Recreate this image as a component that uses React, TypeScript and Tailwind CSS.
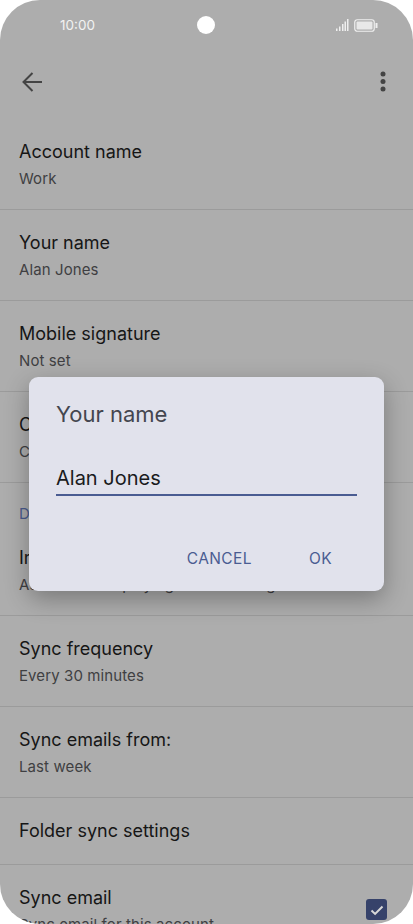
import React from "react"

const font = "font-['Inter',sans-serif]"

function Row({ title, sub, check }: { title: string; sub?: string; check?: boolean }) {
  return (
    <div className="relative border-b border-[#9b9b9b] px-[19px] pb-[18px] pt-[21px]">
      <div className="text-[18px] font-[430] leading-6 text-[#161616]">{title}</div>
      {sub && <div className="mt-[3px] text-[15px] leading-6 tracking-[0.1px] text-[#3f3f42]">{sub}</div>}
      {check && (
        <div className="absolute right-[26px] top-[34px] flex h-[21px] w-[21px] items-center justify-center rounded-[3px] bg-[#36426a]">
          <svg width="14" height="14" viewBox="0 0 14 14" fill="none" stroke="#d8d8d8" strokeWidth="2">
            <path d="M1.5 7.5l3.6 3.4L12.5 3.5" />
          </svg>
        </div>
      )}
    </div>
  )
}

export default function App() {
  return (
    <div className={`relative h-[924px] w-[413px] overflow-hidden bg-white ${font}`}>
      <div className="h-full overflow-hidden rounded-[40px] bg-[#adadad]">
        <div className="flex h-[50px] items-center justify-between pl-[60px] pr-[35px]">
          <span className="text-[13.5px] text-[#f2f2f2]">10:00</span>
          <div className="flex items-center gap-[5px]">
            <svg width="13" height="12" viewBox="0 0 13 12" fill="#efefef">
              <rect x="0" y="9.5" width="1.5" height="2.5" />
              <rect x="3" y="7.5" width="1.5" height="4.5" />
              <rect x="6" y="5" width="1.5" height="7" />
              <rect x="8.5" y="2.5" width="1.5" height="9.5" />
              <rect x="11" y="0" width="1.5" height="12" />
            </svg>
            <svg width="24" height="13" viewBox="0 0 24 13" fill="none">
              <rect x="0.75" y="0.75" width="19.5" height="11.5" rx="2.5" stroke="#efefef" strokeWidth="1.2" />
              <rect x="2.5" y="2.5" width="16" height="8" rx="1" fill="#e8e8e8" />
              <rect x="21.5" y="4" width="2" height="5" fill="#efefef" />
            </svg>
          </div>
        </div>
        <div className="flex h-[69px] items-center justify-between pb-[6px] pl-[20px] pr-[25px]">
          <svg width="24" height="24" viewBox="0 0 24 24" fill="none" stroke="#444" strokeWidth="2">
            <path d="M22 12H4M12.5 3L3.5 12l9 9" />
          </svg>
          <svg width="10" height="24" viewBox="0 0 10 24" fill="#444">
            <circle cx="5" cy="4" r="2.5" />
            <circle cx="5" cy="11.5" r="2.5" />
            <circle cx="5" cy="19" r="2.5" />
          </svg>
        </div>
        <Row title="Account name" sub="Work" />
        <Row title="Your name" sub="Alan Jones" />
        <Row title="Mobile signature" sub="Not set" />
        <div className="px-[19px] pb-[18px] pt-[21px]">
          <div className="text-[18px] font-[430] leading-6 text-[#161616]">Conversation view</div>
          <div className="mt-[3px] text-[15px] leading-6 tracking-[0.1px] text-[#3f3f42]">Combine emails</div>
        </div>
        <div className="border-t border-[#9b9b9b] px-[19px] pb-px pt-[21px] text-[15px] leading-5 text-[#4a5a8c]">
          Data usage
        </div>
        <Row title="Images" sub="Ask before displaying external images" />
        <Row title="Sync frequency" sub="Every 30 minutes" />
        <Row title="Sync emails from:" sub="Last week" />
        <div className="border-b border-[#9b9b9b] px-[19px] py-[21px] text-[18px] font-[430] leading-6 text-[#161616]">
          Folder sync settings
        </div>
        <Row title="Sync email" sub="Sync email for this account" check />
      </div>
      <div className="absolute left-[197px] top-[16px] h-[18px] w-[18px] rounded-full bg-white" />
      <div className="absolute left-[29px] top-[377px] h-[214px] w-[355px] rounded-[9px] bg-[#e1e2ec] px-[27px] pt-[21px] shadow-[0_8px_24px_rgba(0,0,0,0.3)]">
        <div className="text-[22px] leading-8 text-[#44464f]">Your name</div>
        <div className="mt-[34px] w-[301px] border-b-2 border-[#4a5c92] pb-[2px] text-[20px] leading-7 text-[#1a1b20]">
          Alan Jones
        </div>
        <div className="mt-[53px] flex justify-end gap-[57px] pr-[25px] text-[15.5px] leading-5 tracking-[0.4px] text-[#4a5c92]">
          <span>CANCEL</span>
          <span>OK</span>
        </div>
      </div>
    </div>
  )
}
